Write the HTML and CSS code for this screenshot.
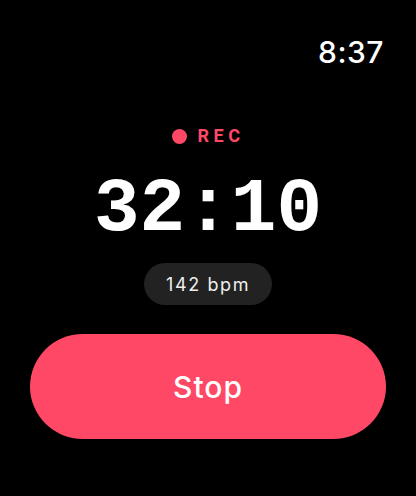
FILE: index.html
```html
<!DOCTYPE html>
<html lang="en">
<head>
    <meta charset="UTF-8">
    <title>Workout</title>
    <link rel="stylesheet" href="styles.css">
</head>
<body>
    <div class="screen">
        <!-- Barra superior con la hora -->
        <div class="status-bar">
            <span class="clock">8:37</span>
        </div>

        <!-- Estado de grabación -->
        <div class="rec">
            <span class="rec-dot"></span>
            <span class="rec-label">REC</span>
        </div>

        <div class="timer">32:10</div>

        <div class="pill">142 bpm</div>

        <button class="stop-btn" type="button">Stop</button>
    </div>
</body>
</html>
```

FILE: styles.css
```css
body { margin: 0; background: #000; font-family: Inter, "Noto Sans", sans-serif; color: #fff; }
.screen { width: 416px; height: 496px; display: flex; flex-direction: column; align-items: center; box-sizing: border-box; padding: 30px 30px 0 30px; }
.status-bar { width: 100%; display: flex; justify-content: flex-end; padding-right: 2px; box-sizing: border-box; }
.clock { font-size: 30px; font-weight: 500; line-height: 44px; letter-spacing: 0.5px; }
.rec { display: flex; align-items: center; gap: 11px; margin-top: 51px; }
.rec-dot { width: 15px; height: 15px; border-radius: 50%; background: #ff4766; }
.rec-label { font-family: Roboto, sans-serif; font-size: 18px; font-weight: 700; letter-spacing: 4.5px; color: #ff4766; line-height: 22px; }
.timer { font-family: "Liberation Mono", monospace; font-weight: 700; font-size: 76px; line-height: 86px; margin-top: 20px; }
.pill { background: #222; border-radius: 21px; height: 42px; padding: 0 22px; display: flex; align-items: center; font-size: 18px; letter-spacing: 1.6px; color: #eee; margin-top: 10px; }
.stop-btn { margin-top: 29px; width: 356px; height: 105px; border: none; border-radius: 53px; background: #ff4766; color: #fff; font-family: Inter, sans-serif; font-size: 30px; font-weight: 500; letter-spacing: 1px; cursor: pointer; }
```
